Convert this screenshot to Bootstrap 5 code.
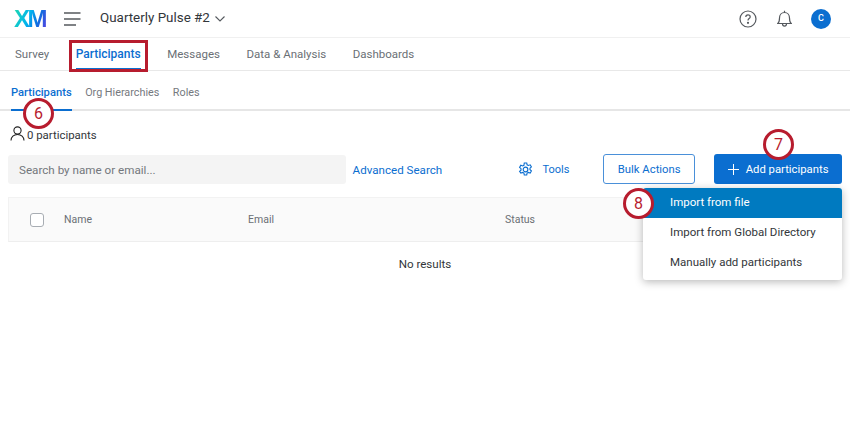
<!DOCTYPE html>
<html lang="en"><head><meta charset="utf-8"><title>Participants</title>
<link href="https://cdn.jsdelivr.net/npm/bootstrap@5.3.0/dist/css/bootstrap.min.css" rel="stylesheet">
<style>
html,body{height:425px;overflow:hidden}
body{font-family:Roboto,"Noto Sans",sans-serif;color:#32363a;background:#fff;font-size:12px;position:relative}
.topbar{height:38px;border-bottom:1px solid #f0f0f0;padding:0 19px 0 14px}
.xm{font-family:"Liberation Sans",sans-serif;font-weight:700;font-size:24px;letter-spacing:-2.500px;line-height:1;background:linear-gradient(110deg,#21dbaa,#00b4ef 45%,#0b70e0 70%,#5a3fe0);-webkit-background-clip:text;background-clip:text;color:transparent;width:32px}
.burger{margin-left:18px}
.pname{font-size:13.400px;margin-left:19px;color:#32363a}
.chev{margin-left:5px}
.tabs1{height:33px;border-bottom:1px solid #e8e8e8;padding-left:15px;gap:26.500px;font-size:11.500px}
.tabs1 span{color:#6a6f75;height:32px;line-height:32px;display:block}
.tabs1 .on{color:#0b6ed0;font-weight:500;font-size:12px;border-bottom:2px solid #0b6ed0}
.tabs2{height:40px;border-bottom:2px solid #e6e6e6;padding-left:11px;gap:13.500px;font-size:10.800px}
.tabs2 span{color:#75797e;height:40px;line-height:44px;display:block}
.tabs2 .on{color:#0b6ed0;font-weight:500;font-size:11.200px;border-bottom:2px solid #0b6ed0}
.pcount{padding:15px 0 0 10px;height:43px;font-size:11.400px;color:#32363a;gap:2px}
.pcount span{line-height:16px;margin-top:1px}
.toolrow{height:30px;padding:0 8px}
.srch{width:338px;height:29px;background:#f4f4f4;border-radius:3px;color:#73777c;padding-left:11px;line-height:30px;font-size:11.650px}
.adv{margin-left:7px;width:166px;color:#0b6ed0;font-size:11.600px;padding-top:3px}
.tools{color:#0b6ed0;font-size:11px;width:85px;gap:9px}
.tools span{padding-top:3px}
.bulk{width:92px;height:30px;border:1px solid #4a90d9;border-radius:3px;color:#0b6ed0;font-size:11.300px;padding:3px 0 0;background:#fff}
.addp{width:128px;height:30px;margin-left:19px;background:#0b6ed0;border:0;border-radius:3px;color:#fff;font-size:11.300px;padding:0;gap:7px}
.addp span{padding-top:3px}
.thead{margin:13px 8px 0;height:45px;background:#fafafa;border:1px solid #f2f2f2;border-bottom:1px solid #eee;font-size:10.500px;color:#6a6f75}
.cbx{width:14px;height:14px;border:1px solid #a8adb3;border-radius:3px;margin-left:21px;background:#fff}
.c1{margin-left:20px;width:184px}.c2{width:257px}
.nores{margin-top:14px;font-size:11.600px;text-align:center;color:#32363a}
.menu-x{position:absolute;left:643px;top:188px;width:199px;height:92px;background:#fff;border-radius:3px;box-shadow:0 2px 8px rgba(0,0,0,.28);overflow:hidden;font-size:11.500px}
.mi{height:30px;line-height:29px;padding-left:27px;color:#32363a}
.mi.act{background:#007ac0;color:#fff}
.pin{position:absolute;border:3px solid #b71c2e;border-radius:50%;width:31px;height:31px;background:#fff;color:#b71c2e;font-size:16px;line-height:25px;text-align:center}
.hl{position:absolute;left:69px;top:40px;width:79px;height:32px;border:3px solid #b71c2e}
</style></head><body>
<div class="topbar d-flex align-items-center">
<div class="xm">XM</div>
<svg class="burger" width="17" height="14" viewBox="0 0 17 14" fill="none" stroke="#55595e" stroke-width="1.500"><path d="M0 1h16.500M0 7h16.500M0 13h12"/></svg>
<div class="pname">Quarterly Pulse #2</div>
<svg class="chev" width="10" height="6" viewBox="0 0 10 6" fill="none" stroke="#55595e" stroke-width="1.100"><path d="M.5.5 5 5 9.500.5"/></svg>
<div class="ms-auto d-flex align-items-center">
<svg width="18" height="18" viewBox="0 0 18 18" fill="none" stroke="#55595e" stroke-width="1.200"><circle cx="9" cy="9" r="8"/><path d="M6.800 7c0-1.300 1-2.100 2.200-2.100s2.200.8 2.200 2c0 1.700-2.200 1.600-2.200 3.500"/><circle cx="9" cy="12.800" r=".5" fill="#55595e"/></svg>
<svg style="margin-left:20px" width="15" height="17" viewBox="0 0 15 17" fill="none" stroke="#55595e" stroke-width="1.200"><path d="M.8 13.500c1.400-1 1.700-2.500 1.700-5.500 0-3 2-5.500 5-5.500s5 2.500 5 5.500c0 3 .3 4.500 1.700 5.500zM5.500 13.800c0 3 4 3 4 0M7.500 2.400V.8"/></svg>
<div class="d-flex align-items-center justify-content-center text-white rounded-circle" style="margin-left:19px;width:20px;height:20px;background:#0b6ed0;font-size:9px;font-weight:500">C</div>
</div></div>
<div class="tabs1 d-flex"><span>Survey</span><span class="on">Participants</span><span>Messages</span><span>Data &amp; Analysis</span><span>Dashboards</span></div>
<div class="tabs2 d-flex"><span class="on">Participants</span><span>Org Hierarchies</span><span>Roles</span></div>
<div class="pcount d-flex align-items-start">
<svg width="15" height="15" viewBox="0 0 15 15" fill="none" stroke="#222" stroke-width="1.100"><circle cx="7.500" cy="4.500" r="3.600"/><path d="M1 14.500c0-3.500 2.800-6 6.500-6s6.500 2.500 6.500 6"/></svg>
<span>0 participants</span></div>
<div class="toolrow d-flex align-items-center">
<div class="srch">Search by name or email...</div>
<div class="adv">Advanced Search</div>
<div class="tools d-flex align-items-center">
<svg width="15" height="15" viewBox="0 0 16 16" fill="none" stroke="#0b6ed0" stroke-width="1.200"><circle cx="8" cy="8" r="2.500"/><path d="M6.700 1h2.600l.4 2 1.300.7 2-.7 1.300 2.300-1.500 1.300v1.600l1.500 1.300-1.300 2.300-2-.7-1.300.7-.4 2H6.700l-.4-2-1.300-.7-2 .7L1.700 10l1.500-1.300V7.100L1.700 5.800 3 3.500l2 .7 1.300-.7z"/></svg>
<span>Tools</span></div>
<button class="btn bulk">Bulk Actions</button>
<button class="btn addp d-flex align-items-center justify-content-center">
<svg width="11" height="11" viewBox="0 0 11 11" stroke="#fff" stroke-width="1"><path d="M5.500 0v11M0 5.500h11"/></svg><span>Add participants</span></button>
</div>
<div class="thead d-flex align-items-center"><div class="cbx"></div><div class="c1">Name</div><div class="c2">Email</div><div>Status</div></div>
<div class="nores">No results</div>
<div class="menu-x"><div class="mi act">Import from file</div><div class="mi">Import from Global Directory</div><div class="mi">Manually add participants</div></div>
<div class="hl"></div>
<div class="pin" style="left:23px;top:98px">6</div>
<div class="pin" style="left:763px;top:129px">7</div>
<div class="pin" style="left:623px;top:188px">8</div>
<script src="https://cdn.jsdelivr.net/npm/bootstrap@5.3.0/dist/js/bootstrap.bundle.min.js"></script>
</body></html>
